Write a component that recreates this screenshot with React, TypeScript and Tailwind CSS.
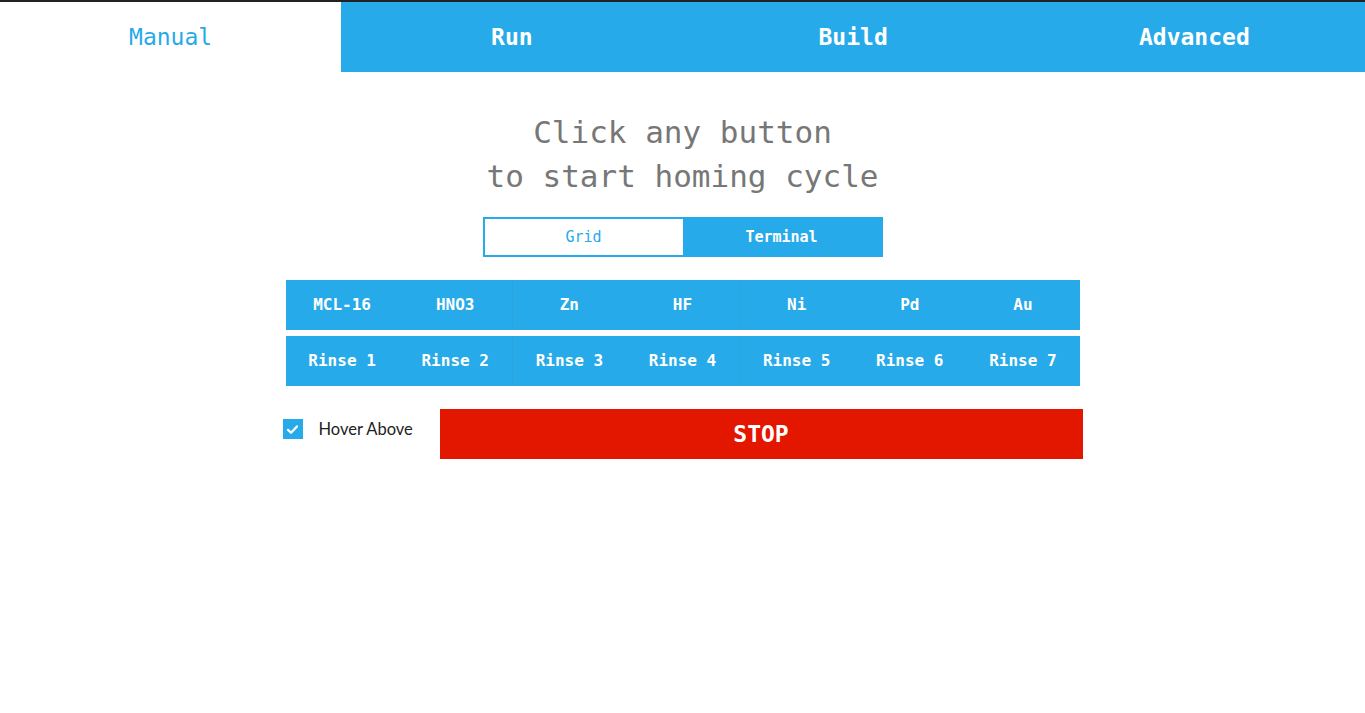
export default function App() {
  const tabs = ["Manual", "Run", "Build", "Advanced"];
  const rows = [
    ["MCL-16", "HNO3", "Zn", "HF", "Ni", "Pd", "Au"],
    ["Rinse 1", "Rinse 2", "Rinse 3", "Rinse 4", "Rinse 5", "Rinse 6", "Rinse 7"],
  ];

  return (
    <div className="min-h-screen bg-white font-['DejaVu_Sans_Mono',monospace]">
      <div className="flex h-[72px] border-t-2 border-[#222]">
        {tabs.map((t, i) => (
          <div
            key={t}
            className={
              i === 0
                ? "flex flex-1 items-center justify-center bg-white text-[23px] text-[#27aae9]"
                : "flex flex-1 items-center justify-center bg-[#27aae9] text-[23px] font-bold text-white"
            }
          >
            {t}
          </div>
        ))}
      </div>

      <div className="mt-[38px] text-center text-[31px] leading-[44px] text-[#777]">
        <div>Click any button</div>
        <div>to start homing cycle</div>
      </div>

      <div className="mx-auto mt-[19px] flex h-10 w-[400px] border-2 border-[#27aae9] text-[15px]">
        <div className="flex flex-1 items-center justify-center bg-white text-[#27aae9]">Grid</div>
        <div className="flex flex-1 items-center justify-center bg-[#27aae9] font-bold text-white">Terminal</div>
      </div>

      <div className="mx-auto mt-[23px] flex w-[794px] flex-col gap-[6px]">
        {rows.map((row, r) => (
          <div key={r} className="flex h-[50px] bg-[#27aae9]">
            {row.map((label, i) => (
              <div
                key={label}
                className={
                  i === 2 || i === 4
                    ? "flex flex-1 items-center justify-center border-l border-[#2ba3dc] text-[16px] font-bold text-white"
                    : "flex flex-1 items-center justify-center text-[16px] font-bold text-white"
                }
              >
                {label}
              </div>
            ))}
          </div>
        ))}
      </div>

      <div className="mx-auto mt-[23px] flex w-[800px] items-start">
        <div className="mt-[8px] flex w-[157px] items-center">
          <div className="flex h-5 w-5 items-center justify-center bg-[#27aae9]">
            <svg viewBox="0 0 16 16" className="h-[13px] w-[13px]">
              <path d="M2.5 8.5 L6.2 12 L13.5 4.2" fill="none" stroke="white" strokeWidth="2.8" strokeLinecap="round" strokeLinejoin="round" />
            </svg>
          </div>
          <span className="ml-4 font-['Lato',sans-serif] text-[16.5px] text-[#222]">Hover Above</span>
        </div>
        <div className="flex h-[50px] w-[643px] items-center justify-center bg-[#e31600] text-[23px] font-bold text-white">
          STOP
        </div>
      </div>
    </div>
  );
}
